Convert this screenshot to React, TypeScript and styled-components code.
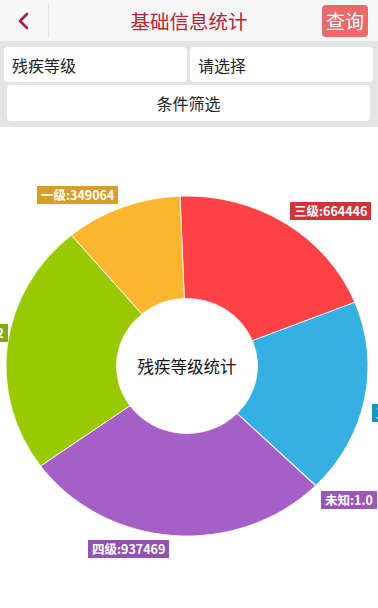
import styled, { createGlobalStyle } from "styled-components"

const GlobalStyle = createGlobalStyle`
  html, body {
    margin: 0;
    padding: 0;
    background: #ffffff;
    font-family: "Noto Sans CJK SC", "Noto Sans", "Liberation Sans", sans-serif;
  }
`

// header
const Nav = styled.header`
  height: 41px;
  display: flex;
  align-items: center;
  background: #f7f7f7;
`

const BackBtn = styled.div`
  width: 49px;
  height: 34px;
  display: flex;
  align-items: center;
  justify-content: center;
  border-right: 1px solid #e2e2e2;
  box-sizing: border-box;
  padding-right: 3px;
`

const Title = styled.h1`
  flex: 1;
  margin: 0;
  text-align: center;
  font-size: 19.5px;
  font-weight: 400;
  color: #b1262f;
  padding-left: 7px;
`

const QueryBtn = styled.button`
  width: 46px;
  height: 32px;
  margin-right: 10px;
  border: none;
  border-radius: 4px;
  background: #e96a6a;
  color: #ffffff;
  font-family: inherit;
  font-size: 19px;
  padding: 0;
  line-height: 32px;
`

// filter panel
const FilterPanel = styled.section`
  background: #e4e4e4;
  padding: 6px 5px 6px 4px;
  display: flex;
  flex-direction: column;
  gap: 3px;
`

const FilterRow = styled.div`
  display: flex;
  gap: 3px;
`

const SelectBox = styled.div`
  flex: 1;
  height: 35px;
  background: #ffffff;
  border-radius: 4px;
  display: flex;
  align-items: center;
  padding-left: 8px;
  font-size: 16px;
  color: #222;
`

const FilterBtn = styled.div`
  height: 36px;
  margin: 0 3px;
  background: #ffffff;
  border-radius: 4px;
  display: flex;
  align-items: center;
  justify-content: center;
  font-size: 16px;
  color: #222;
`

// chart
const ChartArea = styled.div`
  position: relative;
  height: 480px;
  overflow: hidden;
`

// sits over the donut hole
const CenterLabel = styled.div`
  position: absolute;
  inset: 0;
  display: flex;
  align-items: center;
  justify-content: center;
  padding: 0 4px 2px 0;
  font-size: 16.5px;
  color: #111;
  pointer-events: none;
`

const Tag = styled.span<{ $bg: string }>`
  position: absolute;
  height: 18px;
  line-height: 18px;
  padding: 0 4px;
  background: ${p => p.$bg};
  color: #ffffff;
  font-size: 12.5px;
  font-weight: 700;
  white-space: nowrap;
`

const CX = 187
const CY = 239
const RX = 181
const RY = 170
const IRX = 70.5
const IRY = 67.5

// angles clockwise from 12 o'clock
const slices = [
  { from: -2.2, to: 68, color: "#fe4246" },
  { from: 68, to: 134.6, color: "#36b0e2" },
  { from: 134.6, to: 134.8, color: "#a55fc6" },
  { from: 134.8, to: 234, color: "#a55fc6" },
  { from: 234, to: 320.3, color: "#99c901" },
  { from: 320.3, to: 357.8, color: "#fbb631" },
]

const tags = [
  { text: "一级:349064", bg: "#d99f22", pos: { left: 37, top: 59 } },
  { text: "三级:664446", bg: "#d4313b", pos: { left: 290, top: 75 } },
  { text: "未知:1.0", bg: "#9a55b8", pos: { left: 321, top: 364 } },
  { text: "四级:937469", bg: "#9352b1", pos: { left: 88, top: 413 } },
  { text: "二级:815502", bg: "#7fac12", pos: { right: 370, top: 197 } },
  { text: "五级:630997", bg: "#1e93c2", pos: { left: 372, top: 277 } },
]

const pt = (deg: number, rx: number, ry: number) => {
  const a = (deg * Math.PI) / 180
  return [CX + rx * Math.sin(a), CY - ry * Math.cos(a)]
}

const slicePath = (from: number, to: number) => {
  const [x1, y1] = pt(from, RX, RY)
  const [x2, y2] = pt(to, RX, RY)
  const [x3, y3] = pt(to, IRX, IRY)
  const [x4, y4] = pt(from, IRX, IRY)
  const large = to - from > 180 ? 1 : 0
  return `M${x1} ${y1} A${RX} ${RY} 0 ${large} 1 ${x2} ${y2} L${x3} ${y3} A${IRX} ${IRY} 0 ${large} 0 ${x4} ${y4} Z`
}

const Donut = () => (
  <svg width="378" height="480" viewBox="0 0 378 480" style={{ display: "block" }}>
    {slices.map((s, i) => (
      <path key={i} d={slicePath(s.from, s.to)} fill={s.color} stroke="#ffffff" strokeWidth="0.8" />
    ))}
  </svg>
)

const App = () => {
  return (
    <>
      <GlobalStyle />
      <Nav>
        <BackBtn>
          <svg width="14" height="18" viewBox="0 0 14 18">
            <path d="M11 2 L4 9 L11 16" fill="none" stroke="#a3203e" strokeWidth="2.6" strokeLinecap="round" strokeLinejoin="round" />
          </svg>
        </BackBtn>
        <Title>基础信息统计</Title>
        <QueryBtn>查询</QueryBtn>
      </Nav>

      <FilterPanel>
        <FilterRow>
          <SelectBox>残疾等级</SelectBox>
          <SelectBox>请选择</SelectBox>
        </FilterRow>
        <FilterBtn>条件筛选</FilterBtn>
      </FilterPanel>

      <ChartArea>
        <Donut />
        <CenterLabel>残疾等级统计</CenterLabel>
        {tags.map(t => (
          <Tag key={t.text} $bg={t.bg} style={t.pos}>
            {t.text}
          </Tag>
        ))}
      </ChartArea>
    </>
  )
}

export default App
